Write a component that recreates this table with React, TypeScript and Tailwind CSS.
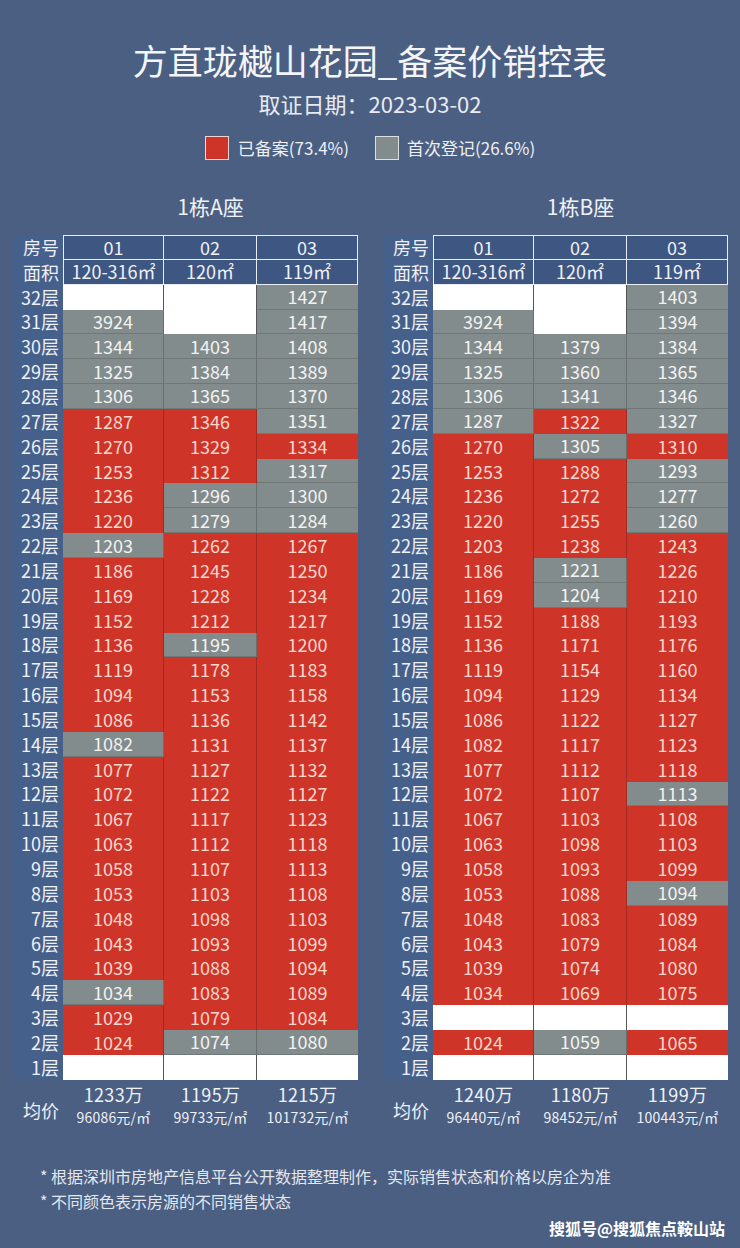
import React from 'react'

// each row: floor 32 -> 1, cells for rooms 01/02/03
// W = empty (white), G = 首次登记 (grey), R = 已备案 (red)
const towerA = [
  'W W G1427',
  'G3924 W G1417',
  'G1344 G1403 G1408',
  'G1325 G1384 G1389',
  'G1306 G1365 G1370',
  'R1287 R1346 G1351',
  'R1270 R1329 R1334',
  'R1253 R1312 G1317',
  'R1236 G1296 G1300',
  'R1220 G1279 G1284',
  'G1203 R1262 R1267',
  'R1186 R1245 R1250',
  'R1169 R1228 R1234',
  'R1152 R1212 R1217',
  'R1136 G1195 R1200',
  'R1119 R1178 R1183',
  'R1094 R1153 R1158',
  'R1086 R1136 R1142',
  'G1082 R1131 R1137',
  'R1077 R1127 R1132',
  'R1072 R1122 R1127',
  'R1067 R1117 R1123',
  'R1063 R1112 R1118',
  'R1058 R1107 R1113',
  'R1053 R1103 R1108',
  'R1048 R1098 R1103',
  'R1043 R1093 R1099',
  'R1039 R1088 R1094',
  'G1034 R1083 R1089',
  'R1029 R1079 R1084',
  'R1024 G1074 G1080',
  'W W W',
]

const towerB = [
  'W W G1403',
  'G3924 W G1394',
  'G1344 G1379 G1384',
  'G1325 G1360 G1365',
  'G1306 G1341 G1346',
  'G1287 R1322 G1327',
  'R1270 G1305 R1310',
  'R1253 R1288 G1293',
  'R1236 R1272 G1277',
  'R1220 R1255 G1260',
  'R1203 R1238 R1243',
  'R1186 G1221 R1226',
  'R1169 G1204 R1210',
  'R1152 R1188 R1193',
  'R1136 R1171 R1176',
  'R1119 R1154 R1160',
  'R1094 R1129 R1134',
  'R1086 R1122 R1127',
  'R1082 R1117 R1123',
  'R1077 R1112 R1118',
  'R1072 R1107 G1113',
  'R1067 R1103 R1108',
  'R1063 R1098 R1103',
  'R1058 R1093 R1099',
  'R1053 R1088 G1094',
  'R1048 R1083 R1089',
  'R1043 R1079 R1084',
  'R1039 R1074 R1080',
  'R1034 R1069 R1075',
  'W W W',
  'R1024 G1059 R1065',
  'W W W',
]

const colWidths = ['w-[101px]', 'w-[93px]', 'w-[101px]']

function Cell({ code, col }: { code: string; col: number }) {
  const kind = code[0]
  const value = code.slice(1)
  const sep = col < 2 ? 'border-r border-r-black/20' : ''
  if (kind === 'R') {
    return (
      <div className={`${colWidths[col]} ${sep} h-full bg-[#cf3429] text-[#f8d6cc] flex items-center justify-center`}>
        {value}
      </div>
    )
  }
  if (kind === 'G') {
    return (
      <div className={`${colWidths[col]} ${sep} h-full bg-[#838c8c] border-b border-b-black/15 text-[#f2f2f2] flex items-center justify-center`}>
        {value}
      </div>
    )
  }
  return <div className={`${colWidths[col]} ${col < 2 ? 'border-r border-r-[#555]' : ''} h-full bg-white`} />
}

function Tower({
  title,
  rows,
  avg,
}: {
  title: string
  rows: string[]
  avg: { total: string; unit: string }[]
}) {
  return (
    <div className="w-[344px] flex flex-col">
      <div className="pl-[49px] text-center text-[21px] leading-[26px] text-[#f0f2f6]">{title}</div>

      <div className="mt-[16px] flex flex-col text-[18px]">
        {/* header rows */}
        {[
          { label: '房号', cells: ['01', '02', '03'] },
          { label: '面积', cells: ['120-316㎡', '120㎡', '119㎡'] },
        ].map((h, hi) => (
          <div key={h.label} className="flex h-[24.85px]">
            <div className="w-[49px] h-full bg-[#46608c] text-[#eef1f6] flex items-center justify-end pr-[4px]">
              {h.label}
            </div>
            {h.cells.map((c, ci) => (
              <div
                key={ci}
                className={`${colWidths[ci]} h-full bg-[#3e5682] text-[#eef1f6] flex items-center justify-center border-b-[1.5px] border-r-[1.5px] border-[#e8ecf3] ${
                  ci === 0 ? 'border-l-[1.5px]' : ''
                } ${hi === 0 ? 'border-t-[1.5px]' : ''}`}
              >
                {c}
              </div>
            ))}
          </div>
        ))}

        {rows.map((r, i) => (
          <div key={i} className="flex h-[24.85px]">
            <div className="w-[49px] h-full bg-[#46608c] text-[#eef1f6] flex items-center justify-end pr-[4px]">
              {32 - i}层
            </div>
            {r.split(' ').map((c, ci) => (
              <Cell key={ci} code={c} col={ci} />
            ))}
          </div>
        ))}

        {/* average price */}
        <div className="flex h-[48px]">
          <div className="w-[49px] flex items-center justify-end pr-[4px] pt-[14px] text-[#eef1f6]">均价</div>
          {avg.map((a, ci) => (
            <div key={ci} className={`${colWidths[ci]} flex flex-col items-center pt-[4px] text-[#eef1f6]`}>
              <div className="text-[18px] leading-[21px] tracking-[0.3px]">{a.total}</div>
              <div className="mt-[2px] text-[14px] leading-[21px] tracking-[0.2px]">{a.unit}</div>
            </div>
          ))}
        </div>
      </div>
    </div>
  )
}

export default function App() {
  return (
    <div
      className="w-[740px] min-h-[1248px] bg-[#4b5f83] text-white flex flex-col"
      style={{ fontFamily: '"Noto Sans CJK SC", "Noto Sans", sans-serif' }}
    >
      <h1 className="pt-[40px] text-center text-[35px] leading-[40px] text-[#f4f5f8] font-normal">
        方直珑樾山花园_备案价销控表
      </h1>
      <div className="mt-[9px] text-center text-[22px] leading-[28px] text-[#e8ebf1]">取证日期：2023-03-02</div>

      <div className="mt-[19px] flex items-center justify-center text-[17px] leading-[24px] text-[#eef0f4]">
        <span className="w-[24px] h-[24px] bg-[#cf3429] border border-[#e9d7d4]" />
        <span className="ml-[9px]">已备案(73.4%)</span>
        <span className="ml-[26px] w-[24px] h-[24px] bg-[#838c8c] border border-[#dde1e1]" />
        <span className="ml-[8px]">首次登记(26.6%)</span>
      </div>

      <div className="mt-[33px] flex gap-[26px] pl-[14px]">
        <Tower
          title="1栋A座"
          rows={towerA}
          avg={[
            { total: '1233万', unit: '96086元/㎡' },
            { total: '1195万', unit: '99733元/㎡' },
            { total: '1215万', unit: '101732元/㎡' },
          ]}
        />
        <Tower
          title="1栋B座"
          rows={towerB}
          avg={[
            { total: '1240万', unit: '96440元/㎡' },
            { total: '1180万', unit: '98452元/㎡' },
            { total: '1199万', unit: '100443元/㎡' },
          ]}
        />
      </div>

      <div className="mt-[36px] pl-[40px] text-[16px] leading-[25px] text-[#e3e7ee]">
        <p>* 根据深圳市房地产信息平台公开数据整理制作，实际销售状态和价格以房企为准</p>
        <p>* 不同颜色表示房源的不同销售状态</p>
      </div>

      <div className="mt-[2px] pr-[15px] text-right text-[16px] leading-[24px] font-bold text-white">
        搜狐号@搜狐焦点鞍山站
      </div>
    </div>
  )
}
